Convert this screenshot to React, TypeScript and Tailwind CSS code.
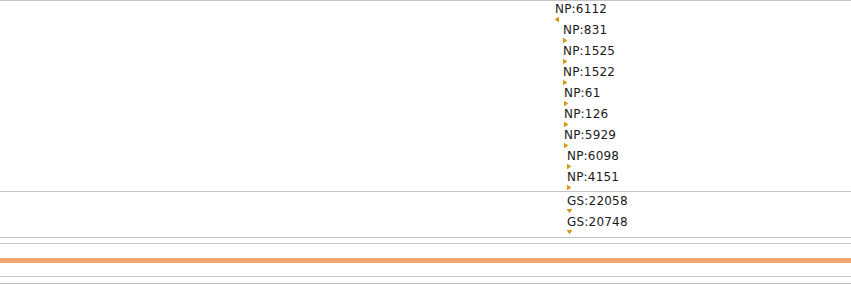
import React from 'react';

type Dir = 'left' | 'right' | 'down';

const npLabels: { text: string; dir: Dir; ml: string }[] = [
  { text: 'NP:6112', dir: 'left', ml: 'ml-[555px]' },
  { text: 'NP:831', dir: 'right', ml: 'ml-[563px]' },
  { text: 'NP:1525', dir: 'right', ml: 'ml-[563px]' },
  { text: 'NP:1522', dir: 'right', ml: 'ml-[563px]' },
  { text: 'NP:61', dir: 'right', ml: 'ml-[564px]' },
  { text: 'NP:126', dir: 'right', ml: 'ml-[564px]' },
  { text: 'NP:5929', dir: 'right', ml: 'ml-[564px]' },
  { text: 'NP:6098', dir: 'right', ml: 'ml-[567px]' },
  { text: 'NP:4151', dir: 'right', ml: 'ml-[567px]' },
];

const gsLabels = ['GS:22058', 'GS:20748'];

const Arrow: React.FC<{ dir: Dir }> = ({ dir }) => {
  if (dir === 'down') {
    return (
      <svg width="5" height="4" viewBox="0 0 5 4" className="block">
        <polygon points="-0.4,0 5.4,0 2.5,4.3" fill="#d69a1a" />
      </svg>
    );
  }
  return (
    <svg width="4" height="5" viewBox="0 0 4 5" className="block">
      <polygon
        points={dir === 'left' ? '4,-0.4 -0.3,2.5 4,5.4' : '0,-0.4 4.3,2.5 0,5.4'}
        fill="#d69a1a"
      />
    </svg>
  );
};

const App: React.FC = () => {
  return (
    <div className="w-[851px] h-[284px] bg-white overflow-hidden font-['DejaVu_Sans',sans-serif] text-[12px] leading-[14px] tracking-[0.2px] text-[#1a1a1a]">
      {/* NP track */}
      <div className="h-[192px] border-t border-b border-[#c4c4c4]">
        {npLabels.map((l) => (
          <div key={l.text} className={`${l.ml} h-[21px]`}>
            <div className="h-[15px] pt-[1px] whitespace-nowrap">{l.text}</div>
            <div className="mt-[1px]">
              <Arrow dir={l.dir} />
            </div>
          </div>
        ))}
      </div>

      {/* GS track */}
      <div className="h-[46px] pt-[1px] border-b border-[#c4c4c4]">
        {gsLabels.map((t) => (
          <div key={t} className="ml-[567px] h-[21px]">
            <div className="h-[15px] pt-[1px] whitespace-nowrap">{t}</div>
            <div className="mt-[1px]">
              <Arrow dir="down" />
            </div>
          </div>
        ))}
      </div>

      <div className="h-[6px] border-b border-[#c4c4c4]" />
      <div className="h-[14px]" />
      <div className="h-[5px] bg-[#f5a46e]" />
      <div className="h-[14px] border-b border-[#c4c4c4]" />
      <div className="h-[7px] border-b border-[#c4c4c4]" />
    </div>
  );
};

export default App;
